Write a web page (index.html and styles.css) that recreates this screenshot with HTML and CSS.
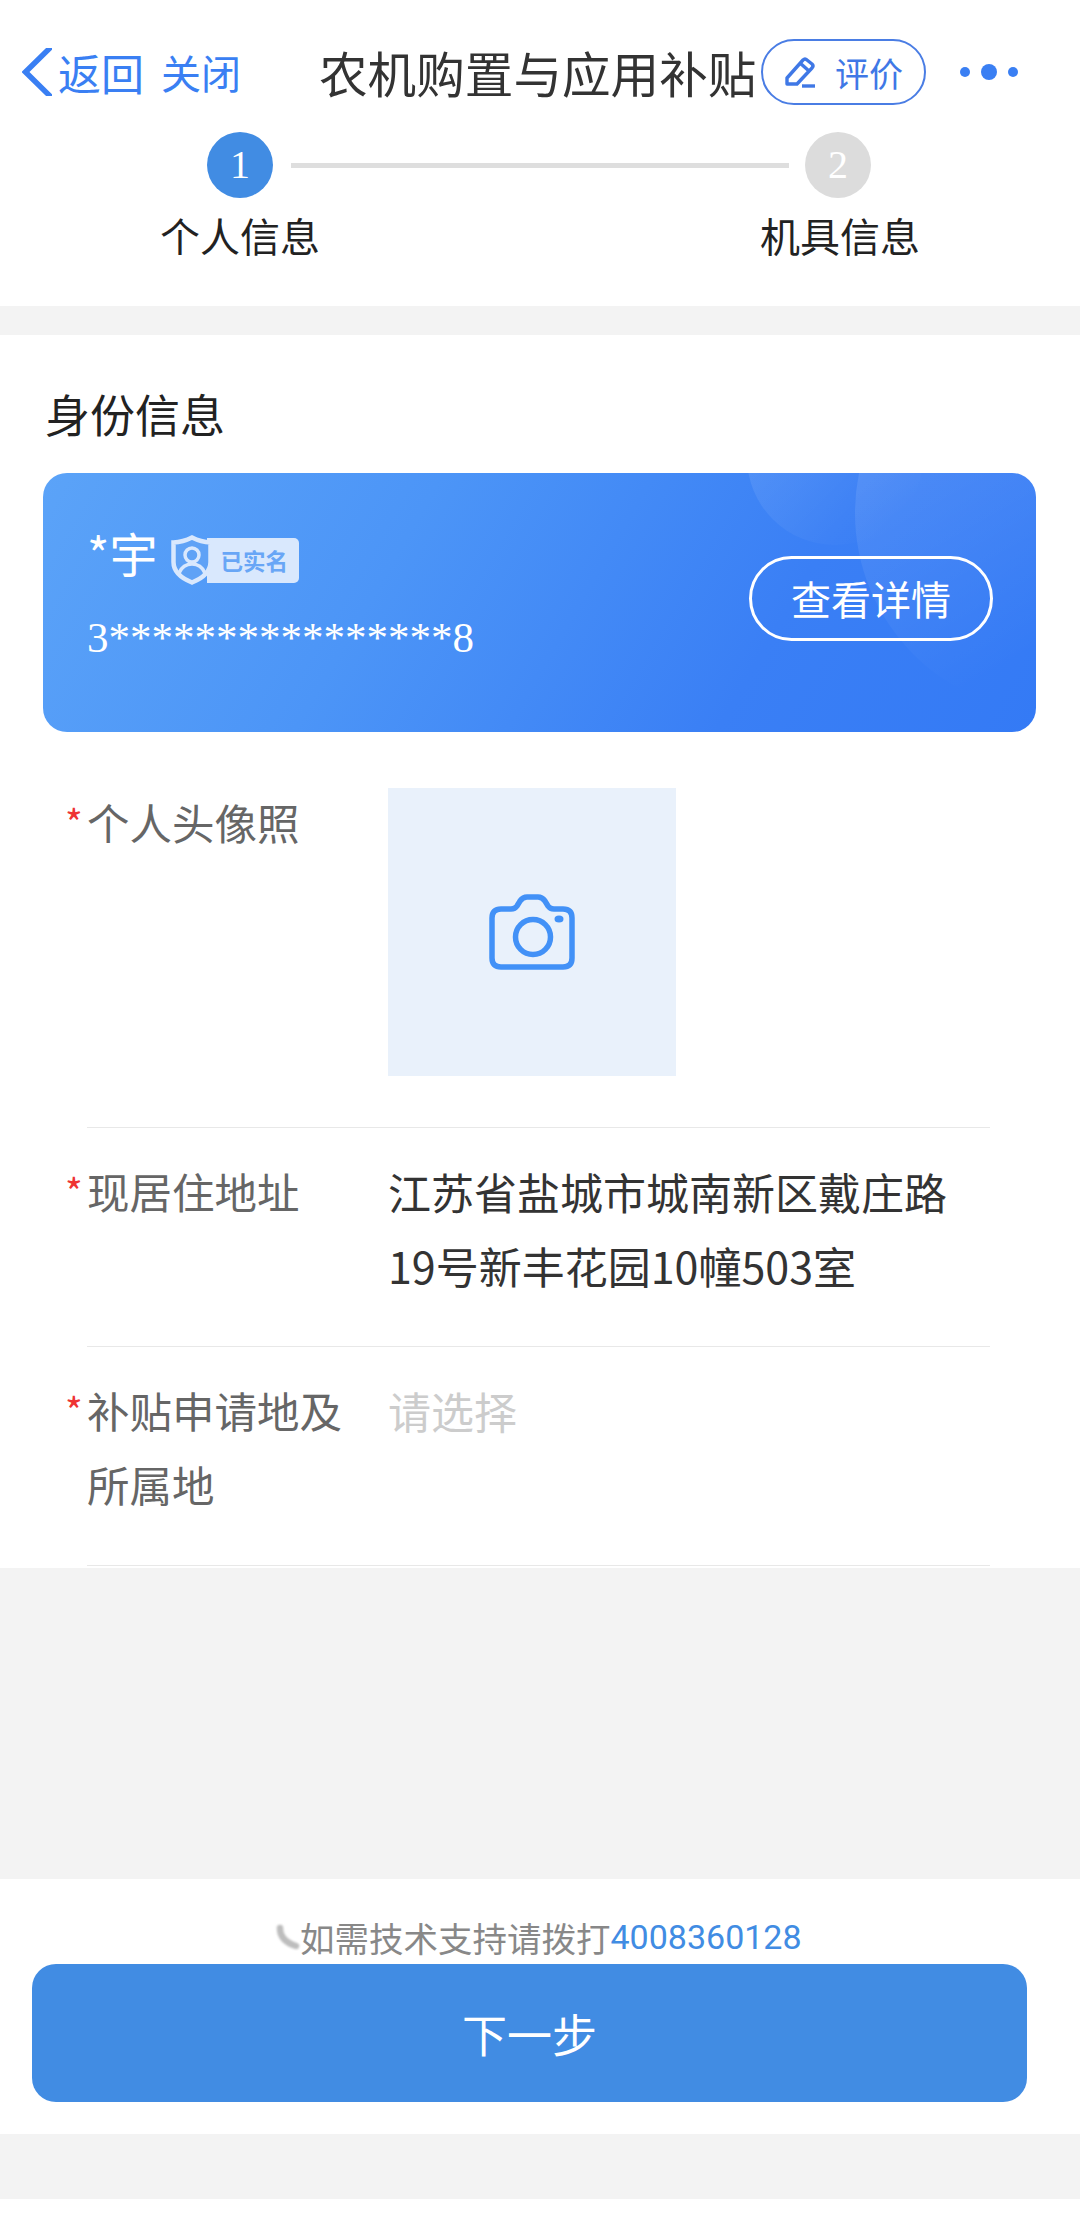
FILE: index.html
```html
<!DOCTYPE html>
<html lang="zh-CN">
<head>
  <meta charset="UTF-8" />
  <meta name="viewport" content="width=device-width, initial-scale=1.0" />
  <title>农机购置与应用补贴</title>
  <link rel="stylesheet" href="styles.css">
</head>
<body>
  <div class="page">
    <!-- 顶部导航 -->
    <header class="nav">
      <svg class="nav-back" width="30" height="48" viewBox="0 0 30 48"><path d="M30 -2 L3.5 24 L30 50" fill="none" stroke="#3a7ff3" stroke-width="5.5"/></svg>
      <span class="nav-link nav-return">返回</span>
      <span class="nav-link nav-close">关闭</span>
      <h1 class="nav-title">农机购置与应用补贴</h1>
      <div class="rate-btn">
        <svg width="36" height="34" viewBox="0 0 36 34"><path d="M4 23 L20 5 Q22 3 24 5 L29 9 Q31 11 29 13 L14 29 L4 29 Z M17 8 L26 16" fill="none" stroke="#3f78e6" stroke-width="3.4" stroke-linejoin="round"/><path d="M19 31 H32" stroke="#3f78e6" stroke-width="3.4"/></svg>
        <span>评价</span>
      </div>
      <div class="nav-more"><i class="dot"></i><i class="dot dot-big"></i><i class="dot"></i></div>
    </header>

    <!-- 步骤条 -->
    <div class="steps">
      <div class="steps-track">
        <span class="step-num step-on">1</span>
        <span class="step-line"></span>
        <span class="step-num">2</span>
      </div>
      <div class="steps-labels">
        <span class="step-label">个人信息</span>
        <span class="step-label">机具信息</span>
      </div>
    </div>

    <div class="band band-top"></div>

    <section class="main">
      <h2 class="main-title">身份信息</h2>

      <div class="id-card">
        <i class="id-bubble id-bubble-a"></i>
        <i class="id-bubble id-bubble-b"></i>
        <div class="id-info">
          <div class="id-name">
            <span>*宇</span>
            <div class="id-badge">
              <svg class="id-shield" width="42" height="50" viewBox="0 0 42 50"><path d="M21 2.5 Q30 7 39.5 7.5 V27 Q39.5 40 21 47.5 Q2.5 40 2.5 27 V7.5 Q12 7 21 2.5 Z" fill="#5fa2f6" stroke="#d9e8fd" stroke-width="4.5"/><circle cx="21" cy="20" r="7" fill="none" stroke="#d9e8fd" stroke-width="3.5"/><path d="M8 38 Q12 29 21 29 Q30 29 34 38" fill="none" stroke="#d9e8fd" stroke-width="3.5"/></svg>
              <span class="id-badge-text">已实名</span>
            </div>
          </div>
          <div class="id-number">3****************8</div>
        </div>
        <div class="id-detail">查看详情</div>
      </div>

      <div class="form-row row-photo">
        <label class="form-label"><b>*</b>个人头像照</label>
        <div class="photo-box">
          <svg width="86" height="76" viewBox="0 0 86 76"><path d="M12 15 H22 Q26 15 28 12 L31 7 Q34 3 38 3 H49 Q53 3 56 7 L59 12 Q61 15 65 15 H74 Q83 15 83 24 V64 Q83 73 74 73 H12 Q3 73 3 64 V24 Q3 15 12 15 Z" fill="none" stroke="#4291f7" stroke-width="5.5"/><circle cx="44" cy="43" r="17.5" fill="none" stroke="#4291f7" stroke-width="5.5"/><ellipse cx="70" cy="25" rx="4.5" ry="3.5" fill="#4291f7"/></svg>
        </div>
      </div>

      <div class="form-row row-addr">
        <label class="form-label"><b>*</b>现居住地址</label>
        <div class="form-value">江苏省盐城市城南新区戴庄路<br>19号新丰花园10幢503室</div>
      </div>

      <div class="form-row row-area">
        <label class="form-label"><b>*</b>补贴申请地及<br>所属地</label>
        <div class="form-value form-empty">请选择</div>
      </div>
    </section>

    <div class="band band-mid"></div>

    <footer class="foot">
      <p class="foot-tip">
        <svg class="foot-icon" width="25" height="26" viewBox="0 0 25 26"><path d="M5 4 Q5 17 21 22" fill="none" stroke="#bdbdbd" stroke-width="6.5" stroke-linecap="round"/></svg><span>如需技术支持请拨打</span><a class="foot-phone">4008360128</a>
      </p>
      <button class="next-btn" type="button">下一步</button>
    </footer>

    <div class="band band-end"></div>
  </div>
</body>
</html>
```

FILE: styles.css
```css
* { box-sizing: border-box; }
body { margin: 0; background: #fff; font-family: "Noto Sans CJK SC", "Noto Sans", sans-serif; }
.page { width: 1080px; height: 2228px; overflow: hidden; background: #fff; }

/* nav */
.nav { display: flex; align-items: center; height: 132px; padding: 39px 0 27px 22px; }
.nav-link { color: #3a7ff3; white-space: nowrap; }
.nav-return { font-size: 43px; margin-left: 6px; }
.nav-close { font-size: 40px; margin-left: 17px; }
.nav-title { margin: 0 0 0 78px; width: 442px; font-size: 48.6px; font-weight: 400; color: #333; white-space: nowrap; }
.rate-btn { display: flex; align-items: center; width: 165px; height: 66px; padding-left: 20px; border: 2px solid #4a7de4; border-radius: 33px; color: #3f78e6; font-size: 34px; }
.rate-btn span { margin-left: 16px; white-space: nowrap; }
.nav-more { display: flex; align-items: center; margin-left: 34px; gap: 11px; }
.dot { display: block; width: 10px; height: 10px; border-radius: 50%; background: #3a7ff3; }
.dot-big { width: 16px; height: 16px; }

/* steps */
.steps { height: 174px; }
.steps-track { display: flex; align-items: center; padding-left: 207px; height: 66px; }
.step-num { width: 66px; height: 66px; border-radius: 50%; background: #dcdcdc; color: #fff; font-family: "Liberation Serif", serif; font-size: 40px; line-height: 66px; text-align: center; }
.step-on { background: #418ce3; }
.step-line { width: 498px; height: 5px; margin: 0 16px 0 18px; background: #dedede; }
.steps-labels { display: flex; justify-content: space-between; width: 760px; margin: 8px 0 0 160px; }
.step-label { font-size: 40px; line-height: 58px; color: #222; }

.band { background: #f3f3f3; }
.band-top { height: 29px; }
.band-mid { height: 311px; }
.band-end { height: 65px; }

/* main */
.main { height: 1233px; padding: 0 0 0 43px; }
.main-title { margin: 0; padding: 50px 0 0 2px; height: 138px; font-size: 45px; line-height: 58px; font-weight: 400; color: #222; }
.id-card { position: relative; display: flex; justify-content: space-between; align-items: center; width: 993px; height: 259px; padding: 0 43px 0 44px; border-radius: 24px; overflow: hidden; background: linear-gradient(120deg, #5ba3f8 0%, #4c95f7 35%, #3a7ff5 72%, #347af5 100%); color: #fff; }
.id-bubble { position: absolute; display: block; border-radius: 50%; }
.id-bubble-a { left: 704px; top: -104px; width: 176px; height: 176px; background: linear-gradient(135deg, rgba(255, 255, 255, 0.14), rgba(255, 255, 255, 0) 85%); }
.id-bubble-b { left: 812px; top: -160px; width: 400px; height: 400px; background: linear-gradient(150deg, rgba(255, 255, 255, 0.1) 25%, rgba(255, 255, 255, 0) 70%); }
.id-info { position: relative; align-self: flex-start; padding-top: 46px; }
.id-name { display: flex; align-items: center; font-size: 48px; line-height: 60px; }
.id-badge { display: flex; align-items: center; margin: 16px 0 0 14px; height: 50px; }
.id-shield { position: relative; z-index: 1; }
.id-badge-text { display: block; width: 92px; height: 45px; margin-left: -6px; padding-left: 13px; border-radius: 0 5px 5px 0; background: #d9e8fd; color: #68a6f6; font-size: 22.5px; line-height: 45px; font-weight: 700; white-space: nowrap; }
.id-number { margin-top: 28px; font-family: "Liberation Serif", serif; font-size: 43px; line-height: 50px; white-space: nowrap; }
.id-detail { position: relative; width: 244px; height: 85px; margin-bottom: 8px; border: 3px solid #fff; border-radius: 43px; font-size: 40px; line-height: 78px; text-align: center; }

.form-row { display: flex; margin-left: 44px; width: 903px; border-bottom: 1px solid #e8e8e8; }
.form-label { position: relative; width: 301px; flex: none; font-size: 42.5px; line-height: 74px; color: #666; }
.form-label b { position: absolute; left: -22px; top: 0; font-weight: 400; font-size: 38px; color: #e33; }
.form-value { font-size: 43px; line-height: 74px; color: #333; white-space: nowrap; }
.form-empty { color: #ccc; }
.row-photo { height: 396px; padding-top: 56px; margin-top: 0; }
.row-photo .form-label { margin-top: -3px; }
.row-addr { height: 219px; padding-top: 26px; }
.row-area { height: 219px; padding-top: 26px; }
.photo-box { display: flex; align-items: center; justify-content: center; width: 288px; height: 288px; background: #e9f1fb; }

/* footer */
.foot { height: 255px; padding-top: 31px; }
.foot-tip { display: flex; align-items: center; margin: 0 0 0 275px; height: 54px; font-size: 34.5px; color: #888; white-space: nowrap; }
.foot-icon { filter: blur(0.8px); }
.foot-phone { color: #418ce3; font-family: Roboto, sans-serif; font-size: 34px; }
.next-btn { display: block; width: 995px; height: 138px; margin-left: 32px; border: 0; border-radius: 24px; background: #418ce3; color: #fff; font-family: inherit; font-size: 45px; }
```
